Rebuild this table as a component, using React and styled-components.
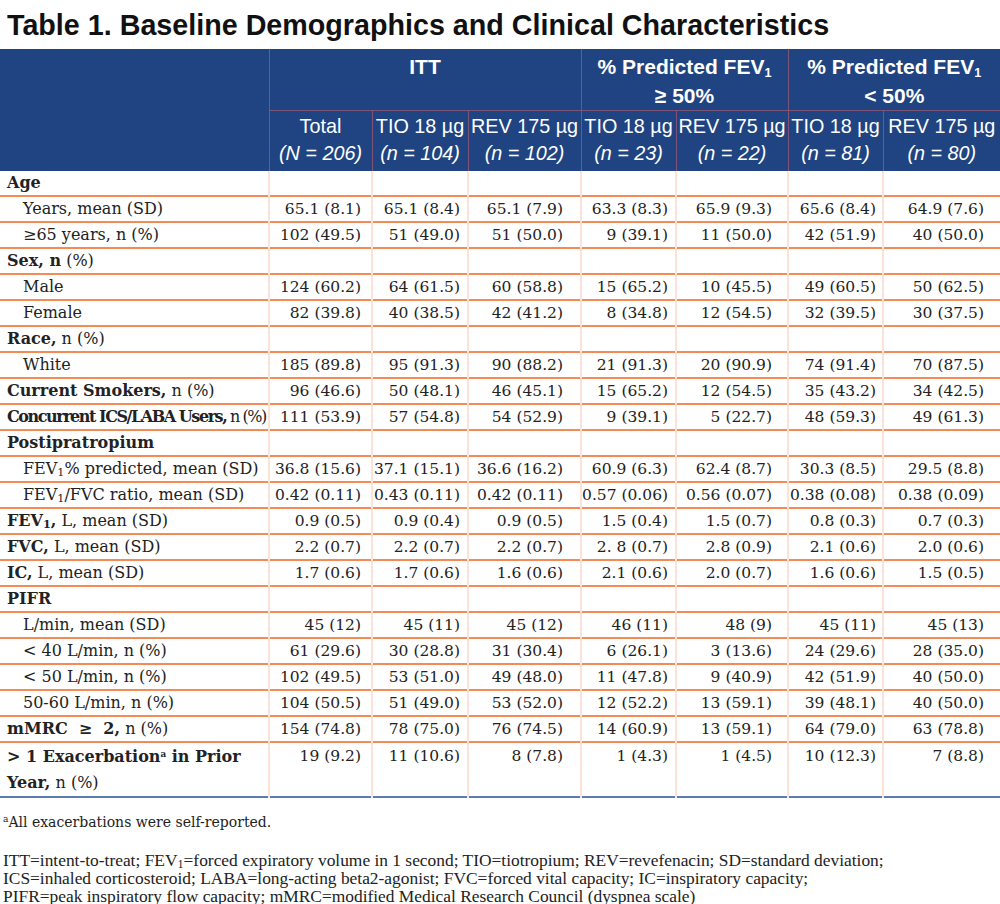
import React from "react";
import styled, { createGlobalStyle } from "styled-components";

const Global = createGlobalStyle`
body{margin:0;background:#fff;}
`
const Page = styled.div`
width:1000px;
height:904px;
overflow:hidden;
background:#fff;
`
const Title = styled.h1`
margin:0;
height:49px;
padding:2px 0 0 7px;
box-sizing:border-box;
font-family:"Liberation Sans",Arial,sans-serif;
font-weight:bold;
font-size:28.7px;
line-height:46px;
color:#111;
white-space:nowrap;
`
const Table = styled.table`
width:1000px;
border-collapse:collapse;
table-layout:fixed;
`
const HeadRow = styled.tr`
background:#1f4481;
height:${p => p.$h}px;
`
const HeadCell = styled.th`
color:#fff;
font-family:"Liberation Sans",Arial,sans-serif;
font-weight:${p => p.$bold ? "bold" : "normal"};
font-size:${p => p.$bold ? "21px" : "19.8px"};
line-height:${p => p.$bold ? "29px" : "27px"};
text-align:center;
vertical-align:${p => p.$bold ? "top" : "middle"};
padding:${p => p.$bold ? "3px 0 0" : "0 0 2px"};
border-left:1px solid #7f5577;
border-bottom:${p => p.$group ? "1px solid #7f5577" : "none"};
white-space:nowrap;
&:first-child{border-left:none;}
i{font-style:italic;}
sub{font-size:0.6em;line-height:0;vertical-align:-0.25em;}
`
const BodyRow = styled.tr`
height:${p => p.$tall ? 54 : 24}px;
border-bottom:2px solid ${p => p.$last ? "#5b7bb5" : "#f58a55"};
`
const Label = styled.td`
font-family:"DejaVu Serif",serif;
font-size:16px;
color:#222;
padding:${p => p.$wrap ? 1 : 0}px 0 0 ${p => p.$sub ? 23 : 7}px;
vertical-align:top;
line-height:${p => p.$wrap ? 26 : 24}px;
letter-spacing:${p => p.$tight ? "-1.45px" : "0"};
white-space:${p => p.$wrap ? "normal" : "nowrap"};
overflow:hidden;
b{font-weight:bold;}
sub{font-size:0.7em;line-height:0;vertical-align:-0.2em;}
sup{font-size:0.55em;line-height:0;vertical-align:0.6em;}
`
const Value = styled.td`
font-family:"DejaVu Serif",serif;
font-size:15.5px;
color:#222;
text-align:right;
vertical-align:top;
line-height:24px;
padding:${p => p.$top}px ${p => p.$pr}px 0 0;
border-left:2px solid #fce3d6;
white-space:nowrap;
`
const Notes = styled.div`
padding:14px 0 0 3px;
color:#222;
`
const NoteA = styled.p`
margin:0 0 19px;
font-family:"DejaVu Serif",serif;
font-size:14px;
line-height:20px;
sup{font-size:0.65em;line-height:0;vertical-align:0.55em;}
`
const NoteAbbr = styled.p`
margin:0;
font-family:"Liberation Serif","Times New Roman",serif;
font-size:17.4px;
line-height:18px;
white-space:nowrap;
sub{font-size:0.7em;line-height:0;vertical-align:-0.2em;}
`

const widths = [269, 103, 96, 113, 95, 112, 95, 117];
const pads = [10, 7, 17, 7, 15, 6, 16];

const rows = [
  { label: <b>Age</b> },
  { label: "Years, mean (SD)", sub: true, v: ["65.1 (8.1)", "65.1 (8.4)", "65.1 (7.9)", "63.3 (8.3)", "65.9 (9.3)", "65.6 (8.4)", "64.9 (7.6)"] },
  { label: "≥65 years, n (%)", sub: true, v: ["102 (49.5)", "51 (49.0)", "51 (50.0)", "9 (39.1)", "11 (50.0)", "42 (51.9)", "40 (50.0)"] },
  { label: <><b>Sex, n</b> (%)</> },
  { label: "Male", sub: true, v: ["124 (60.2)", "64 (61.5)", "60 (58.8)", "15 (65.2)", "10 (45.5)", "49 (60.5)", "50 (62.5)"] },
  { label: "Female", sub: true, v: ["82 (39.8)", "40 (38.5)", "42 (41.2)", "8 (34.8)", "12 (54.5)", "32 (39.5)", "30 (37.5)"] },
  { label: <><b>Race,</b> n (%)</> },
  { label: "White", sub: true, v: ["185 (89.8)", "95 (91.3)", "90 (88.2)", "21 (91.3)", "20 (90.9)", "74 (91.4)", "70 (87.5)"] },
  { label: <><b>Current Smokers,</b> n (%)</>, v: ["96 (46.6)", "50 (48.1)", "46 (45.1)", "15 (65.2)", "12 (54.5)", "35 (43.2)", "34 (42.5)"] },
  { label: <><b>Concurrent ICS/LABA Users,</b> n (%)</>, tight: true, v: ["111 (53.9)", "57 (54.8)", "54 (52.9)", "9 (39.1)", "5 (22.7)", "48 (59.3)", "49 (61.3)"] },
  { label: <b>Postipratropium</b> },
  { label: <>FEV<sub>1</sub>% predicted, mean (SD)</>, sub: true, v: ["36.8 (15.6)", "37.1 (15.1)", "36.6 (16.2)", "60.9 (6.3)", "62.4 (8.7)", "30.3 (8.5)", "29.5 (8.8)"] },
  { label: <>FEV<sub>1</sub>/FVC ratio, mean (SD)</>, sub: true, v: ["0.42 (0.11)", "0.43 (0.11)", "0.42 (0.11)", "0.57 (0.06)", "0.56 (0.07)", "0.38 (0.08)", "0.38 (0.09)"] },
  { label: <><b>FEV<sub>1</sub>,</b> L, mean (SD)</>, v: ["0.9 (0.5)", "0.9 (0.4)", "0.9 (0.5)", "1.5 (0.4)", "1.5 (0.7)", "0.8 (0.3)", "0.7 (0.3)"] },
  { label: <><b>FVC,</b> L, mean (SD)</>, v: ["2.2 (0.7)", "2.2 (0.7)", "2.2 (0.7)", "2. 8 (0.7)", "2.8 (0.9)", "2.1 (0.6)", "2.0 (0.6)"] },
  { label: <><b>IC,</b> L, mean (SD)</>, v: ["1.7 (0.6)", "1.7 (0.6)", "1.6 (0.6)", "2.1 (0.6)", "2.0 (0.7)", "1.6 (0.6)", "1.5 (0.5)"] },
  { label: <b>PIFR</b> },
  { label: "L/min, mean (SD)", sub: true, v: ["45 (12)", "45 (11)", "45 (12)", "46 (11)", "48 (9)", "45 (11)", "45 (13)"] },
  { label: "< 40 L/min, n (%)", sub: true, v: ["61 (29.6)", "30 (28.8)", "31 (30.4)", "6 (26.1)", "3 (13.6)", "24 (29.6)", "28 (35.0)"] },
  { label: "< 50 L/min, n (%)", sub: true, v: ["102 (49.5)", "53 (51.0)", "49 (48.0)", "11 (47.8)", "9 (40.9)", "42 (51.9)", "40 (50.0)"] },
  { label: "50-60 L/min, n (%)", sub: true, v: ["104 (50.5)", "51 (49.0)", "53 (52.0)", "12 (52.2)", "13 (59.1)", "39 (48.1)", "40 (50.0)"] },
  { label: <><b>mMRC&nbsp; ≥&nbsp; 2,</b> n (%)</>, v: ["154 (74.8)", "78 (75.0)", "76 (74.5)", "14 (60.9)", "13 (59.1)", "64 (79.0)", "63 (78.8)"] },
  { label: <><b>&gt; 1 Exacerbation<sup>a</sup> in Prior Year,</b> n (%)</>, wrap: true, tall: true, v: ["19 (9.2)", "11 (10.6)", "8 (7.8)", "1 (4.3)", "1 (4.5)", "10 (12.3)", "7 (8.8)"] },
];

const arms = [
  ["Total", "N = 206"], ["TIO 18 µg", "n = 104"], ["REV 175 µg", "n = 102"],
  ["TIO 18 µg", "n = 23"], ["REV 175 µg", "n = 22"],
  ["TIO 18 µg", "n = 81"], ["REV 175 µg", "n = 80"],
];

export default function App() {
  return (
    <Page>
      <Global />
      <Title>Table 1. Baseline Demographics and Clinical Characteristics</Title>
      <Table>
        <colgroup>
          {widths.map((w, i) => <col key={i} style={{ width: w }} />)}
        </colgroup>
        <thead>
          <HeadRow $h={61}>
            <HeadCell rowSpan={2} />
            <HeadCell $bold $group colSpan={3}>ITT</HeadCell>
            <HeadCell $bold $group colSpan={2}>% Predicted FEV<sub>1</sub><br />≥ 50%</HeadCell>
            <HeadCell $bold $group colSpan={2}>% Predicted FEV<sub>1</sub><br />&lt; 50%</HeadCell>
          </HeadRow>
          <HeadRow $h={60}>
            {arms.map(([a, n], i) => (
              <HeadCell key={i} style={i === 0 ? { borderLeft: "1px solid #7f5577" } : undefined}>
                {a}<br /><i>({n})</i>
              </HeadCell>
            ))}
          </HeadRow>
        </thead>
        <tbody>
          {rows.map((r, i) => (
            <BodyRow key={i} $tall={r.tall} $last={i === rows.length - 1}>
              <Label $sub={r.sub} $tight={r.tight} $wrap={r.wrap}>{r.label}</Label>
              {pads.map((p, j) => (
                <Value key={j} $pr={p} $top={r.wrap ? 1 : 0}>{r.v ? r.v[j] : ""}</Value>
              ))}
            </BodyRow>
          ))}
        </tbody>
      </Table>
      <Notes>
        <NoteA><sup>a</sup>All exacerbations were self-reported.</NoteA>
        <NoteAbbr>
          ITT=intent-to-treat; FEV<sub>1</sub>=forced expiratory volume in 1 second; TIO=tiotropium; REV=revefenacin; SD=standard deviation;<br />
          ICS=inhaled corticosteroid; LABA=long-acting beta2-agonist; FVC=forced vital capacity; IC=inspiratory capacity;<br />
          PIFR=peak inspiratory flow capacity; mMRC=modified Medical Research Council (dyspnea scale)
        </NoteAbbr>
      </Notes>
    </Page>
  );
}
